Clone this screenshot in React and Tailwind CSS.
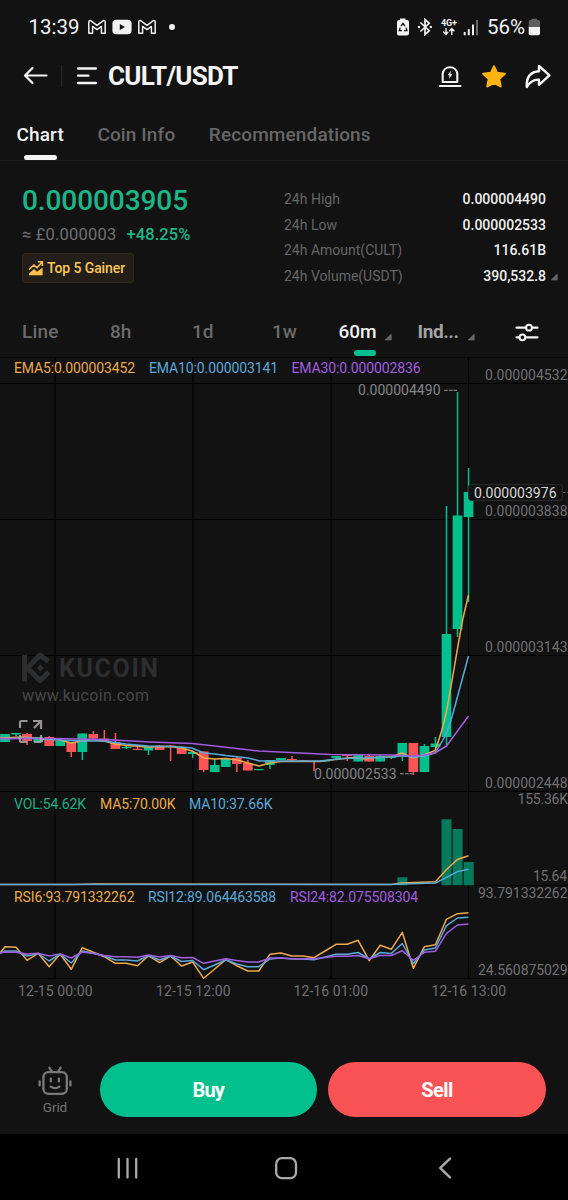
import React, { useState } from "react";

const GREEN = "#02c08d";
const RED = "#fb5456";
const ORANGE = "#eda94a";
const BLUE = "#5aa9dc";
const PURPLE = "#a15de0";

const START_X = 5;
const STEP = 11.036;
const GRID_X = [55, 193, 331, 468.5];

// [body top, body bottom, high, low, up]
const CANDLES = [
  [734, 742, 734, 742, 1],
  [733, 734.5, 733, 736, 1],
  [734, 741, 733, 745, 0],
  [737, 742, 737, 742, 1],
  [737, 746, 736, 746, 0],
  [741, 746, 741, 746, 1],
  [742, 752, 742, 757, 0],
  [733.5, 752, 733.5, 760, 1],
  [734, 738.5, 731, 738.5, 0],
  [738.5, 742, 730, 742, 0],
  [742, 749, 733, 749, 0],
  [747, 748.2, 745.5, 749, 1],
  [748.8, 750, 745, 750, 0],
  [746, 750.5, 746, 755, 1],
  [745.5, 750, 745, 750, 0],
  [745.5, 747, 745, 761, 0],
  [748, 754, 746, 754, 0],
  [752, 754, 752, 758, 1],
  [751.5, 770, 751.5, 772, 0],
  [765, 772, 759, 772, 1],
  [759, 767, 759, 767, 1],
  [758, 764, 757, 772, 0],
  [763, 770.5, 760, 770.5, 0],
  [769, 770.2, 769, 770.2, 1],
  [760, 765, 760, 769, 1],
  [758, 760, 758, 760, 1],
  [759, 760.2, 756, 761, 0],
  [760.5, 761.5, 760.5, 761.5, 0],
  [761, 762, 761, 771, 0],
  [760, 761.5, 760, 761.5, 1],
  [756, 758, 756, 760, 1],
  [754.5, 756, 754.5, 761, 0],
  [755, 761.5, 755, 761.5, 1],
  [756, 761.5, 754, 761.5, 0],
  [756, 761.5, 755, 761.5, 1],
  [756.5, 758, 756, 759, 1],
  [743, 757, 743, 761, 1],
  [743, 772, 743, 775, 0],
  [746, 772, 744, 772, 1],
  [743.5, 747, 737, 748, 1],
  [634, 737, 506, 745, 1],
  [515.5, 629, 392, 637, 1],
  [492, 517, 468, 602, 1],
];

const RSI6 = [
  946.7, 947.3, 960.3, 953.3, 966.7, 954, 969.3, 947.7, 952.3, 956.7, 963.3,
  963.3, 965.7, 955.7, 962.7, 956, 966, 962, 978.3, 969, 959.7, 965.7, 971, 971,
  954.3, 953, 956, 956, 957.7, 951, 944.3, 944.3, 940.3, 960.7, 945.3, 949.3,
  932.3, 968.3, 946.7, 944.7, 919.3, 913.7, 912.7,
];
const RSI12 = [
  951, 951, 956, 953.5, 961, 954, 963, 951, 953.3, 956, 960, 960, 961, 955.5,
  960, 956, 961.5, 960.5, 969.7, 965, 959.7, 964, 966.7, 966.7, 959, 958, 959,
  959, 959.7, 957, 954.3, 954.3, 952.5, 959, 952.5, 953.5, 943.5, 963.7, 950,
  948, 925.7, 918, 917.3,
];
const RSI24 = [
  952, 952.3, 954, 953.3, 956, 954, 958, 952, 953.5, 955.5, 956.7, 956.7, 957.3,
  955, 957, 955.5, 957.7, 957.5, 963.3, 961, 958.7, 960.5, 962, 962, 958, 958,
  958.7, 958.7, 958.7, 957.5, 956.3, 956.3, 955.5, 958.7, 955.5, 955.5, 950.7,
  960.3, 952.3, 951.3, 933.3, 925, 924,
];

const STATS = [
  { label: "24h High", value: "0.000004490" },
  { label: "24h Low", value: "0.000002533" },
  { label: "24h Amount(CULT)", value: "116.61B" },
  { label: "24h Volume(USDT)", value: "390,532.8", more: true },
];

const linePoints = (series) =>
  `0,953 ${series.map((y, i) => `${START_X + STEP * i},${y}`).join(" ")}`;

const Corner = ({ className }) => (
  <svg viewBox="0 0 8 8" className={className}>
    <path d="M7.3 1V7.1H1Z" fill="#66666a" stroke="#66666a" strokeWidth="0.6" strokeLinejoin="round" />
  </svg>
);

const GmailIcon = () => (
  <svg viewBox="0 0 20 16" className="h-4 w-5">
    <path
      d="M1.8 14.3V3.2Q1.8 1.2 3.6 1.6L10 6.4L16.4 1.6Q18.2 1.2 18.2 3.2V14.3H14.4V7.4L10 10.6L5.6 7.4V14.3Z"
      fill="none"
      stroke="#f2f2f2"
      strokeWidth="1.5"
      strokeLinejoin="round"
    />
  </svg>
);

const StatusBar = () => (
  <div className="flex h-[52px] items-center pt-[2px] pl-7 text-[20.5px] text-[#f2f2f2]">
    <span className="w-[59px] pl-[0.5px]">13:39</span>
    <GmailIcon />
    <svg viewBox="0 0 20 16" className="ml-[5px] h-4 w-5">
      <rect x="0.4" y="0.8" width="19.2" height="14.4" rx="3.8" fill="#f2f2f2" />
      <path d="M7.8 5L13 8L7.8 11Z" fill="#121212" />
    </svg>
    <div className="ml-[5px] flex">
      <GmailIcon />
    </div>
    <div className="ml-3 h-[6px] w-[6px] rounded-full bg-[#f2f2f2]" />
    <svg viewBox="0 0 14 18" className="ml-[221px] h-[18px] w-[14px]">
      <path d="M4 0.5H9.5V2H11Q13 2 13 4V15.5Q13 17.5 11 17.5H3Q1 17.5 1 15.5V4Q1 2 3 2H4Z" fill="#f2f2f2" />
      <path d="M5 8.2L7 5.4L9 8.2M10 9.6L11 12.6H8M6 12.6H3.2L4.3 9.6" fill="none" stroke="#121212" strokeWidth="1.3" />
    </svg>
    <svg viewBox="0 0 16 18" className="ml-[7px] h-[18px] w-4">
      <path
        d="M3.4 4.5L12.2 12.7L8 16.6V1.4L12.2 5.3L3.4 13.5"
        fill="none"
        stroke="#f2f2f2"
        strokeWidth="1.7"
      />
      <circle cx="2" cy="9" r="1.2" fill="#f2f2f2" />
      <circle cx="13.8" cy="9" r="1.2" fill="#f2f2f2" />
    </svg>
    <svg viewBox="0 0 18 18" className="ml-[7px] h-[18px] w-[18px]">
      <text x="1" y="8" fontSize="9" fontWeight="700" textLength="16" fill="#f2f2f2">4G+</text>
      <path d="M6 10V16.2M3.2 13.6L6 16.4L8.2 13.8M11.8 17V10.8M9.4 13.2L11.8 10.6L14.4 13.2" fill="none" stroke="#f2f2f2" strokeWidth="1.4" />
    </svg>
    <svg viewBox="0 0 16 17" className="ml-[5px] h-[17px] w-4">
      <path d="M1.7 13V16.2M5.8 10.2V16.2M10 5.4V16.2" stroke="#f2f2f2" strokeWidth="2" />
      <path d="M14 1V16.2" stroke="#6a6a6a" strokeWidth="2" />
    </svg>
    <span className="ml-[8px] w-[41px]">56%</span>
    <svg viewBox="0 0 13 18" className="h-[18px] w-[13px]">
      <path d="M3.5 0.7H9V2H10.5Q12 2 12 4V9H0.7V4Q0.7 2 2.2 2H3.5Z" fill="#606060" />
      <path d="M0.7 9H12V15.5Q12 17.3 10.2 17.3H2.5Q0.7 17.3 0.7 15.5Z" fill="#f2f2f2" />
    </svg>
  </div>
);

const Header = () => (
  <div className="flex h-12 items-center pr-[17px] pl-[23px]">
    <svg viewBox="0 0 26 20" className="h-5 w-[26px]">
      <path d="M23.5 9.5H2.5M9.5 2L2 9.5L9.5 17" fill="none" stroke="#f4f4f4" strokeWidth="2.2" strokeLinecap="round" strokeLinejoin="round" />
    </svg>
    <div className="ml-3 h-[22px] w-px bg-[#2a2a2a]" />
    <svg viewBox="0 0 22 20" className="ml-[14px] h-5 w-[22px]">
      <path d="M2 2.5H20M2 9.7H12.5M2 17H20" stroke="#f4f4f4" strokeWidth="2.3" strokeLinecap="round" />
    </svg>
    <h1 className="ml-[10px] pt-px text-[26px] font-bold tracking-[-0.75px] text-[#f4f4f4]">CULT/USDT</h1>
    <div className="ml-auto flex items-center">
      <svg viewBox="0 0 24 24" className="h-6 w-6">
        <path d="M4.7 18V9.5A7.4 7.4 0 0 1 19.3 9.5V18Z" fill="none" stroke="#f4f4f4" strokeWidth="2.1" strokeLinejoin="round" />
        <path d="M2 22H22.4" stroke="#f4f4f4" strokeWidth="2.2" strokeLinecap="round" />
        <path d="M12.8 6.8L9.7 11.3H11.5L11.1 14.8L14.3 10.3H12.4Z" fill="#f4f4f4" />
      </svg>
      <svg viewBox="0 0 26 25" className="ml-[19px] h-[25px] w-[26px]">
        <path
          d="M13 2.4L16 8.9L23.8 9.8L18.2 15L19.6 22.4L13 18.9L6.4 22.4L7.8 15L2.2 9.8L10 8.9Z"
          fill="#fdb310"
          stroke="#fdb310"
          strokeWidth="2.2"
          strokeLinejoin="round"
        />
      </svg>
      <svg viewBox="0 0 26 25" className="ml-[18px] h-[25px] w-[26px]">
        <path
          d="M14 1.9L24.4 11.4L14 20.8V15.7C8.5 15.2 5 18 1.8 23C1.3 14.5 4.6 7.8 14 7.2Z"
          fill="none"
          stroke="#f4f4f4"
          strokeWidth="2.4"
          strokeLinejoin="round"
        />
      </svg>
    </div>
  </div>
);

const Tabs = () => {
  const [active, setActive] = useState("Chart");

  return (
    <div className="flex h-[61px] gap-[33.5px] border-b border-[#1e1e1e] pt-[22px] pl-[16.5px]">
      {["Chart", "Coin Info", "Recommendations"].map((tab) => (
        <button
          key={tab}
          onClick={() => setActive(tab)}
          className={
            "flex flex-col items-center text-[19px] leading-[26px] font-medium tracking-[0.13px] " +
            (tab === active ? "text-[#f4f4f4]" : "text-[#676767]")
          }
        >
          {tab}
          {tab === active && <span className="mt-[7px] h-[6px] w-[33px] rounded-full bg-[#f4f4f4]" />}
        </button>
      ))}
    </div>
  );
};

const Ticker = () => (
  <div className="flex h-[146px] justify-between pt-[22px] pl-[22px]">
    <div>
      <div className="text-[28px] leading-9 font-medium tracking-[-0.08px] text-[#1cb687]">0.000003905</div>
      <div className="mt-[4px] flex gap-[10px] text-[16.5px] leading-6">
        <span className="tracking-[0.2px] text-[#707070]">≈ £0.000003</span>
        <span className="font-medium tracking-[0.1px] text-[#1cb687]">+48.25%</span>
      </div>
      <div className="mt-[6px] flex h-[30px] w-[112px] items-center rounded-[3px] border border-[#30271a] bg-[#231f18] pl-[5px]">
        <svg viewBox="0 0 16 16" className="h-4 w-4">
          <path d="M1 9.5L6 5L9 7.8L13.5 2.8M9.8 1.8H14.4V6" fill="none" stroke="#fbc04f" strokeWidth="1.6" />
          <path d="M1 15.2V13.4L6 9L9 11.8L14.6 7.4V15.2Z" fill="#fbc04f" />
        </svg>
        <span className="ml-[3px] text-[14px] font-medium tracking-[-0.1px] whitespace-nowrap text-[#fbc75e]">Top 5 Gainer</span>
      </div>
    </div>
    <div className="w-[284px] pt-[4px] text-sm leading-[25.7px]">
      {STATS.map((item) => (
        <div key={item.label} className="flex items-center">
          <span className="text-[#666]">{item.label}</span>
          <span className="ml-auto font-medium text-[#f0f0f0]">{item.value}</span>
          <span className="flex w-[22px] pl-1">
            {item.more && <Corner className="h-2 w-2" />}
          </span>
        </div>
      ))}
    </div>
  </div>
);

const Intervals = () => (
  <div className="flex h-[50px] items-center pt-px pl-[22px] text-[19px] font-medium text-[#6a6a6a]">
    <span className="w-[88px] tracking-[0.2px]">Line</span>
    <span className="w-[82px]">8h</span>
    <span className="w-[80px]">1d</span>
    <span className="w-[66.5px]">1w</span>
    <div className="relative flex w-[79px] items-center text-[#f0f0f0]">
      60m
      <Corner className="mt-2 ml-[7px] h-2 w-2" />
      <span className="absolute top-[31.5px] left-[15.5px] h-[6px] w-[22px] rounded-full bg-[#02c08d]" />
    </div>
    <div className="flex items-center text-[#a3a3a3]">
      <span className="font-bold tracking-[-0.4px]">Ind...</span>
      <Corner className="mt-2 ml-[8px] h-2 w-2" />
    </div>
    <svg viewBox="0 0 24 20" className="ml-[40px] h-5 w-6">
      <path d="M1.5 4.7H11M17 4.7H22.5M1.5 14.3H4.5M10.3 14.3H22.5" stroke="#f4f4f4" strokeWidth="2.2" strokeLinecap="round" />
      <circle cx="14" cy="4.7" r="2.9" fill="none" stroke="#f4f4f4" strokeWidth="2" />
      <circle cx="7.4" cy="14.3" r="2.9" fill="none" stroke="#f4f4f4" strokeWidth="2" />
    </svg>
  </div>
);

const Label = ({ x, y, width, color = "#707073", children, ...rest }) => (
  <text x={x} y={y} textLength={width} fill={color} fontSize="14" {...rest}>
    {children}
  </text>
);

const Grid = ({ rows, top, bottom }) => (
  <g stroke="#000" strokeWidth="1.1">
    {GRID_X.map((x) => (
      <line key={x} x1={x} x2={x} y1={top} y2={bottom} />
    ))}
    {rows.map((y) => (
      <line key={y} x1="0" x2="568" y1={y} y2={y} />
    ))}
  </g>
);

const Watermark = () => (
  <g>
    <g fill="none" stroke="#2d2e30" strokeWidth="5">
      <path d="M24.6 655V681.5" />
      <path d="M48.5 661.5L40 655L27.5 668L40 680.5L48.8 672" strokeLinejoin="round" />
      <path d="M40.4 664.6L43.8 668L40.4 671.4L37 668Z" fill="#2d2e30" stroke="none" />
    </g>
    <text x="59" y="677" fontSize="25" fontWeight="700" textLength="99" fill="#2d2e30">KUCOIN</text>
    <text x="22" y="700.5" fontSize="16" textLength="127" fill="#484848">www.kucoin.com</text>
  </g>
);

const PriceChart = () => (
  <svg viewBox="0 357 568 435" className="block h-[435px] w-[568px]">
    <Grid top={357} bottom={792} rows={[357, 383.5, 519.5, 655.5, 791.5]} />
    <Watermark />
    {CANDLES.map(([top, bottom, high, low, up], i) => {
      const x = START_X + STEP * i;
      const color = up ? GREEN : RED;
      return (
        <g key={i} fill={color}>
          <rect x={x - 0.7} y={high} width="1.5" height={low - high} />
          <rect x={x - 4.8} y={top} width="9.7" height={bottom - top} />
        </g>
      );
    })}
    <g fill="none" strokeWidth="1.5" strokeLinejoin="round">
      <path
        d="M0 738L22 737L44 739L60 740L71 743L82 741L93 739.5L104 741L115 744L126 745.5L148 747L170 746.5L181 748L192 751L204 758L215 759L226 758.5L237 760L248 763L259 766L270 763L281 761.5L320 761.5L331 760L353 757.5L364 759L375 757.5L391 757L402 753L413 758L424 755L435 750.5C441 735 444 724 446.5 711C452 682 457 650 463 618L468.5 595"
        stroke={ORANGE}
      />
      <path
        d="M0 739L27 738L60 740L82 741L104 741L126 744L148 746L170 746.5L181 747L192 748L204 753L215 754L226 755.5L248 758L260 761L320 761L342 758.5L364 758L391 757L402 755.5L413 757L424 756L435 753C442 742 447 734 452 717L468.5 656"
        stroke={BLUE}
      />
      <path
        d="M0 738.5L55 738.5L104 739.5L150 742L192 743.5L215 746L259 751L300 753L331 754.5L391 755L413 756L424 755L435 753L446.5 746L457.5 731L468.5 716"
        stroke={PURPLE}
      />
    </g>
    <g fill="none" stroke="#b0a9ae" strokeWidth="2.2" opacity="0.85">
      <path d="M20 728V722.5Q20 721 21.5 721H27.5M33 721H41V729M41 721L34 728M20 735V740.5Q20 742 21.5 742H27.5M41 735V740.5Q41 742 39.5 742H34" />
    </g>
    <Label x={14} y={373} width={121} color={ORANGE}>EMA5:0.000003452</Label>
    <Label x={149} y={373} width={129} color={BLUE}>EMA10:0.000003141</Label>
    <Label x={291.5} y={373} width={129} color={PURPLE}>EMA30:0.000002836</Label>
    <Label x={358} y={395} width={82.5} color="#838386">0.000004490</Label>
    <Label x={314} y={778.5} width={82.5} color="#838386">0.000002533</Label>
    <path d="M444 390.3H457M400 773.6H413" stroke="#77777a" strokeWidth="1.2" strokeDasharray="3.8 1" />
    <Label x={485} y={380} width={82.5}>0.000004532</Label>
    <Label x={485} y={516} width={82.5}>0.000003838</Label>
    <Label x={485} y={652} width={82.5}>0.000003143</Label>
    <Label x={485} y={788} width={82.5}>0.000002448</Label>
    <rect x="468.5" y="484.5" width="94" height="16" rx="3" fill="#121212" stroke="#29292b" />
    <path d="M563 492.5H568" stroke="#555" strokeDasharray="3 1" />
    <Label x={474} y={497.5} width={82.5} color="#d6d6d6">0.000003976</Label>
  </svg>
);

const VolumeChart = () => (
  <svg viewBox="0 792 568 94" className="block h-[94px] w-[568px]">
    <Grid top={792} bottom={886} rows={[885.7]} />
    <g fill="#087a5c">
      <rect x="397.3" y="877.3" width="10" height="8" />
      <rect x="441.5" y="819.3" width="10" height="66" />
      <rect x="452.6" y="829" width="10" height="56.3" />
      <rect x="463.7" y="862" width="10" height="23.3" />
    </g>
    <g fill="none" strokeWidth="1.5">
      <polyline points="0,884.6 75,884.4 95,884 391,884.6 402,883 435.5,881.8 446.5,869.5 457.5,859.5 468.5,855.7" stroke={ORANGE} />
      <polyline points="0,884.6 393,884.6 402,884 435.5,883 446.5,877.3 457.5,871.6 468.5,869.2" stroke={BLUE} />
    </g>
    <Label x={14} y={808.5} width={72} color="#1caf84">VOL:54.62K</Label>
    <Label x={100} y={808.5} width={75.5} color={ORANGE}>MA5:70.00K</Label>
    <Label x={189} y={808.5} width={83.5} color={BLUE}>MA10:37.66K</Label>
    <Label x={517.5} y={804} width={50.5}>155.36K</Label>
    <Label x={533} y={881.3} width={34}>15.64</Label>
  </svg>
);

const RsiChart = () => (
  <svg viewBox="0 886 568 119" className="block h-[119px] w-[568px]">
    <Grid top={886} bottom={978} rows={[978.3]} />
    <g fill="none" strokeWidth="1.5" strokeLinejoin="round">
      <polyline points={linePoints(RSI6)} stroke={ORANGE} />
      <polyline points={linePoints(RSI12)} stroke={BLUE} />
      <polyline points={linePoints(RSI24)} stroke={PURPLE} />
    </g>
    <Label x={14} y={902} width={120.5} color={ORANGE}>RSI6:93.791332262</Label>
    <Label x={148} y={902} width={128} color={BLUE}>RSI12:89.064463588</Label>
    <Label x={290} y={902} width={128} color={PURPLE}>RSI24:82.075508304</Label>
    <Label x={478} y={898} width={89.5}>93.791332262</Label>
    <Label x={478} y={975} width={89.5}>24.560875029</Label>
    <Label x={18} y={996.3} width={74.5}>12-15 00:00</Label>
    <Label x={156} y={996.3} width={74.5}>12-15 12:00</Label>
    <Label x={293.5} y={996.3} width={74.5}>12-16 01:00</Label>
    <Label x={431.5} y={996.3} width={74.5}>12-16 13:00</Label>
  </svg>
);

const Actions = () => (
  <div className="flex h-[129px] items-start pt-[57px] pr-[22px] pl-[33px]">
    <div className="flex w-[44px] flex-col items-center pt-1">
      <svg viewBox="0 0 34 30" className="h-[30px] w-[34px]">
        <g fill="none" stroke="#79797b" strokeWidth="2.3" strokeLinecap="round">
          <rect x="5.4" y="6.2" width="23.4" height="21.6" rx="5" />
          <path d="M11.4 1.8L13.8 5.4M22.6 1.8L20.2 5.4M1.6 15.4V19.4M32.4 15.4V19.4M12.9 12.6V15.4M20.9 12.6V15.4M12.6 20.6Q17 23.6 21.4 20.6" />
        </g>
      </svg>
      <span className="mt-[3px] text-[13.5px] leading-4 tracking-[-0.1px] text-[#727274]">Grid</span>
    </div>
    <button className="ml-[22.5px] h-[55px] w-[217.5px] rounded-full bg-[#02c08d] pt-px text-[20px] font-bold tracking-[-0.8px] text-white">
      Buy
    </button>
    <button className="ml-[11px] h-[55px] w-[218px] rounded-full bg-[#f95355] pt-px text-[20px] font-bold tracking-[-0.6px] text-white">
      Sell
    </button>
  </div>
);

const NavBar = () => (
  <div className="flex h-[66px] items-center bg-black pt-px pl-[116px]">
    <svg viewBox="0 0 23 22" className="h-[22px] w-[23px]">
      <path d="M2.8 2V20.5M11.5 2V20.5M20.2 2V20.5" stroke="#a9a9a9" strokeWidth="2.3" strokeLinecap="round" />
    </svg>
    <svg viewBox="0 0 24 24" className="ml-[135px] h-6 w-6">
      <rect x="2.2" y="2.2" width="19.8" height="20" rx="5.8" fill="none" stroke="#a9a9a9" strokeWidth="2.3" />
    </svg>
    <svg viewBox="0 0 16 24" className="ml-[139px] h-6 w-4">
      <path d="M13 2.6L3.3 12L13 21.3" fill="none" stroke="#a9a9a9" strokeWidth="2.4" strokeLinecap="round" />
    </svg>
  </div>
);

export default function App() {
  return (
    <div className="h-[1200px] w-[568px] overflow-hidden bg-[#121212] font-['Roboto',sans-serif]">
      <StatusBar />
      <Header />
      <Tabs />
      <Ticker />
      <Intervals />
      <PriceChart />
      <VolumeChart />
      <RsiChart />
      <Actions />
      <NavBar />
    </div>
  );
}
